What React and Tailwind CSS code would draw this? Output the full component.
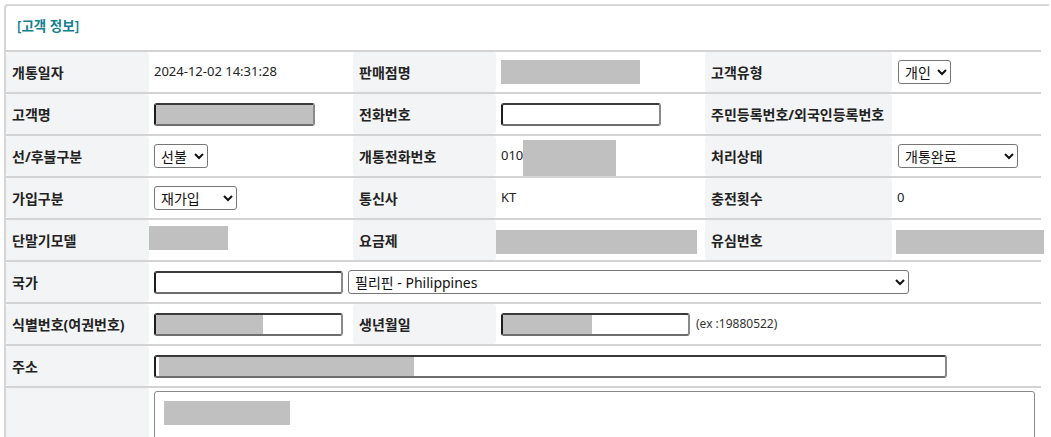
import React from "react";

const cols = "grid grid-cols-[143px_204px_143px_209px_187px_149px] border-b-2 border-[#d3d3d3]";

function Label({ children, className = "" }) {
  return (
    <div
      className={`flex h-[40px] items-center rounded-[3px] bg-[#f3f4f6] pl-[6px] text-[14px] font-bold text-[#222] ${className}`}
    >
      {children}
    </div>
  );
}

function Cell({ children, pad = "pl-[5px]", className = "" }) {
  return <div className={`flex h-[40px] items-center text-[13px] text-[#222] ${pad} ${className}`}>{children}</div>;
}

function Mask({ className = "" }) {
  return <div className={`bg-[#c0c0c0] ${className}`} />;
}

function Field({ width, fill = 0, fillOffset = 0, className = "" }) {
  return (
    <div
      className={`flex h-[23px] shrink-0 overflow-hidden rounded-[3px] border-2 border-t-[#3a3a3a] border-l-[#1e1e1e] border-r-[#8a8a8a] border-b-[#6e6e6e] bg-white ${className}`}
      style={{ width }}
    >
      {fill > 0 && <div className="h-full bg-[#c0c0c0]" style={{ width: fill, marginLeft: fillOffset }} />}
    </div>
  );
}

function Select({ width, value, options }) {
  return (
    <select
      defaultValue={value}
      className="h-[24px] rounded-[3px] border border-[#767676] bg-white pl-[2px] text-[14px] text-[#111]"
      style={{ width }}
    >
      {options.map((o) => (
        <option key={o}>{o}</option>
      ))}
    </select>
  );
}

export default function App() {
  return (
    <div className="h-[437px] overflow-hidden bg-white pl-[4px] pt-[4px] font-['Noto_Sans','Noto_Sans_CJK_KR',sans-serif]">
      <div className="w-[1045px] rounded-tl-[4px] border-l-2 border-t-2 border-[#d6d6d6]">
        <div className="flex h-[46px] w-[1035px] items-center border-b-2 border-[#d3d3d3] pb-[4px] pl-[11px] text-[13.5px] font-semibold text-[#15808e]">
          [고객 정보]
        </div>

        <div className="w-[1035px]">
          <div className={cols}>
            <Label>개통일자</Label>
            <Cell>2024-12-02 14:31:28</Cell>
            <Label>판매점명</Label>
            <Cell>
              <Mask className="h-[24px] w-[139px]" />
            </Cell>
            <Label>고객유형</Label>
            <Cell pad="pl-[6px]">
              <Select width={53} value="개인" options={["개인", "법인"]} />
            </Cell>
          </div>

          <div className={cols}>
            <Label>고객명</Label>
            <Cell>
              <Field width={161} fill={157} />
            </Cell>
            <Label>전화번호</Label>
            <Cell>
              <Field width={160} />
            </Cell>
            <Label className="whitespace-nowrap">주민등록번호/외국인등록번호</Label>
            <Cell />
          </div>

          <div className={cols}>
            <Label>선/후불구분</Label>
            <Cell>
              <Select width={54} value="선불" options={["선불", "후불"]} />
            </Cell>
            <Label>개통전화번호</Label>
            <Cell className="items-end">
              <span className="self-center">010</span>
              <Mask className="h-[36px] w-[93px]" />
            </Cell>
            <Label>처리상태</Label>
            <Cell pad="pl-[6px]">
              <Select width={120} value="개통완료" options={["개통완료", "개통대기", "개통취소"]} />
            </Cell>
          </div>

          <div className={cols}>
            <Label>가입구분</Label>
            <Cell>
              <Select width={83} value="재가입" options={["신규", "재가입", "번호이동"]} />
            </Cell>
            <Label>통신사</Label>
            <Cell>KT</Cell>
            <Label>충전횟수</Label>
            <Cell>0</Cell>
          </div>

          <div className={cols}>
            <Label>단말기모델</Label>
            <Cell pad="pl-0">
              <Mask className="mb-[4px] h-[24px] w-[79px]" />
            </Cell>
            <Label>요금제</Label>
            <Cell pad="pl-0">
              <Mask className="mt-[4px] h-[24px] w-[201px]" />
            </Cell>
            <Label>유심번호</Label>
            <Cell pad="pl-[4px]">
              <Mask className="mt-[4px] h-[24px] w-[148px] shrink-0" />
            </Cell>
          </div>

          <div className="grid grid-cols-[143px_1fr] border-b-2 border-[#d3d3d3]">
            <Label>국가</Label>
            <Cell className="gap-[5px]">
              <Field width={189} />
              <Select width={561} value="필리핀 - Philippines" options={["필리핀 - Philippines", "베트남 - Vietnam"]} />
            </Cell>
          </div>

          <div className="grid grid-cols-[143px_204px_143px_1fr] border-b-2 border-[#d3d3d3]">
            <Label>식별번호(여권번호)</Label>
            <Cell>
              <Field width={189} fill={107} />
            </Cell>
            <Label>생년월일</Label>
            <Cell className="gap-[6px]">
              <Field width={189} fill={89} />
              <span className="text-[12px] text-[#333]">(ex :19880522)</span>
            </Cell>
          </div>

          <div className="grid grid-cols-[143px_1fr] border-b-2 border-[#d3d3d3]">
            <Label>주소</Label>
            <Cell>
              <Field width={793} fill={255} fillOffset={3} />
            </Cell>
          </div>

          <div className="grid grid-cols-[143px_1fr]">
            <Label className="h-[60px]" />
            <div className="pl-[5px] pt-[3px]">
              <div className="h-[60px] w-[881px] rounded-[3px] border border-[#8a8a8a] bg-white pl-[9px] pt-[9px]">
                <Mask className="h-[24px] w-[126px]" />
              </div>
            </div>
          </div>
        </div>
      </div>
    </div>
  );
}
